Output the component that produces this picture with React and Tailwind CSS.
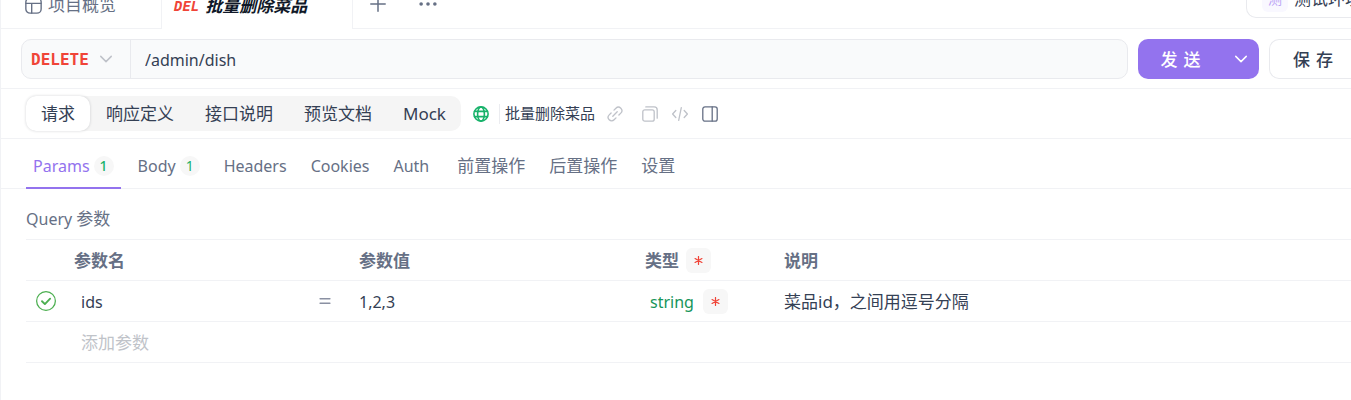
import React, { useState } from "react";
import clsx from "clsx";

const requestTabs = [
  { name: "Params", count: 1 },
  { name: "Body", count: 1 },
  { name: "Headers" },
  { name: "Cookies" },
  { name: "Auth" },
  { name: "前置操作", cjk: true, startsGroup: true },
  { name: "后置操作", cjk: true },
  { name: "设置", cjk: true },
];

const views = ["请求", "响应定义", "接口说明", "预览文档", "Mock"];

function Icon({ size = 16, className, children, ...props }) {
  return (
    <svg
      width={size}
      height={size}
      viewBox="0 0 16 16"
      fill="none"
      stroke="currentColor"
      strokeWidth="1.3"
      strokeLinecap="round"
      strokeLinejoin="round"
      className={clsx("shrink-0", className)}
      aria-hidden="true"
      {...props}
    >
      {children}
    </svg>
  );
}

function Chevron({ className }) {
  return (
    <Icon size={14} className={className}>
      <path d="M2 5l6 6 6-6" strokeWidth="1.7" />
    </Icon>
  );
}

function Required() {
  return (
    <button type="button" aria-label="必需" className="flex size-[25px] shrink-0 items-center justify-center rounded-md bg-[#f7f7f7] text-[#f04438]">
      <Icon size={9} strokeWidth="2.2">
        <path d="M8 1v14M1.9 4.5l12.2 7M14.1 4.5l-12.2 7" />
      </Icon>
    </button>
  );
}

function TopBar() {
  return (
    <header className="-mt-5 flex h-[49px]">
      <button type="button" className="flex w-[160px] items-center gap-1.5 border-b border-[#f1f2f5] pt-0.5 pl-6 text-[17px] text-[#667085]">
        <Icon size={17}>
          <rect x="0.8" y="0.8" width="14.4" height="14.4" rx="4" />
          <path d="M1 6h14M6.3 6v9" />
        </Icon>
        项目概览
      </button>
      <button type="button" className="flex w-[192px] items-center gap-1.5 border-x border-[#f1f2f5] pt-0.5 pl-3 text-[17px] font-bold text-[#101828] italic">
        <span className="font-['DejaVu_Sans_Mono',monospace] text-sm text-[#f04438]">DEL</span>
        批量删除菜品
      </button>
      <div className="flex flex-1 items-center gap-[33px] border-b border-[#f1f2f5] pl-[17px] text-[#667085]">
        <button type="button" aria-label="新建">
          <Icon>
            <path d="M8 0.8v14.4M0.8 8h14.4" strokeWidth="1.5" />
          </Icon>
        </button>
        <button type="button" aria-label="更多">
          <Icon size={18} fill="currentColor" stroke="none">
            <circle cx="1.9" cy="8" r="1.6" />
            <circle cx="8" cy="8" r="1.6" />
            <circle cx="14.1" cy="8" r="1.6" />
          </Icon>
        </button>
      </div>
      <div className="border-b border-[#f1f2f5] pb-2.5">
        <button type="button" className="flex h-full w-[105px] items-center gap-1.5 overflow-hidden rounded-l-[10px] border border-r-0 border-[#e9eaee] pl-[15px] text-[17px] whitespace-nowrap text-[#344054]">
          <span className="flex size-[26px] shrink-0 items-center justify-center rounded-md bg-[#f9f8ff] text-sm text-[#b9a4f5]">测</span>
          测试环境
        </button>
      </div>
    </header>
  );
}

function UrlBar() {
  return (
    <div className="flex gap-2.5 border-b border-[#f1f2f5] pt-2.5 pb-[9px] pl-5">
      <div className="flex h-10 flex-1 overflow-hidden rounded-[10px] border border-[#e9eaee] bg-[#f9fafb]">
        <button type="button" className="flex w-[109px] items-center gap-2.5 border-r border-[#e9eaee] pl-[9px] font-['DejaVu_Sans_Mono',monospace] text-base font-bold text-[#f04438]">
          <span className="pt-0.5">DELETE</span>
          <Chevron className="text-[#bfc2c9]" />
        </button>
        <input aria-label="接口路径" defaultValue="/admin/dish" className="min-w-0 flex-1 bg-transparent px-3.5 pt-0.5 text-base text-[#344054] outline-none" />
      </div>
      <div className="flex h-10 w-[121px] overflow-hidden rounded-[10px] bg-[#9373ee] text-white">
        <button type="button" className="flex flex-1 items-center justify-center gap-1.5 pt-0.5 text-[17px] font-medium">
          <span>发</span>
          <span>送</span>
        </button>
        <button type="button" aria-label="发送选项" className="flex w-9 items-center justify-center">
          <Chevron />
        </button>
      </div>
      <button type="button" className="flex h-10 w-[82px] items-center gap-1.5 rounded-l-[10px] border border-r-0 border-[#e9eaee] pt-0.5 pl-[23px] text-[17px] font-medium text-[#344054]">
        <span>保</span>
        <span>存</span>
      </button>
    </div>
  );
}

function ViewBar() {
  const [view, setView] = useState("请求");

  return (
    <div className="flex items-center border-b border-[#f1f2f5] py-[7px] pl-[25px]">
      <div className="flex h-[35px] gap-px rounded-[10px] bg-[#f5f5f5] text-[17px] text-[#344054]">
        {views.map((name) => (
          <button
            key={name}
            type="button"
            onClick={() => setView(name)}
            className={clsx("rounded-[10px] px-[15px]", view === name && "bg-white shadow-[0_0_3px_rgba(16,24,40,0.18)]")}
          >
            {name}
          </button>
        ))}
      </div>
      <Icon className="ml-3 text-[#17b26a]" strokeWidth="1.6">
        <circle cx="8" cy="8" r="7.1" />
        <ellipse cx="8" cy="8" rx="3.4" ry="7.1" />
        <path d="M1.6 5.4h12.8M1.6 10.6h12.8" />
      </Icon>
      <div className="ml-2.5 h-5 border-l border-[#ebecf0]" />
      <span className="ml-[5px] text-[15px] text-[#344054]">批量删除菜品</span>
      <div className="ml-3 flex items-center gap-3.5 text-[#bfc2c9]">
        <button type="button" aria-label="复制链接" className="mr-[5px]">
          <Icon>
            <path d="M7 4.1l1.9-1.9a3.4 3.4 0 0 1 4.9 4.9l-1.9 1.9M9 11.9l-1.9 1.9a3.4 3.4 0 0 1-4.9-4.9l1.9-1.9M5.8 10.2l4.4-4.4" />
          </Icon>
        </button>
        <button type="button" aria-label="复制">
          <Icon>
            <rect x="0.8" y="3.8" width="11.4" height="11.4" rx="2" />
            <path d="M3.8 0.9h8.4a3 3 0 0 1 3 3v8.3" />
          </Icon>
        </button>
        <button type="button" aria-label="生成代码">
          <Icon>
            <path d="M3.8 4.5L0.6 8l3.2 3.5M12.2 4.5L15.4 8l-3.2 3.5M9.3 1.6L6.7 14.4" />
          </Icon>
        </button>
        <button type="button" aria-label="侧栏" className="text-[#667085]">
          <Icon>
            <rect x="0.8" y="0.8" width="14.4" height="14.4" rx="2.2" />
            <path d="M10.2 1v14" />
          </Icon>
        </button>
      </div>
    </div>
  );
}

function RequestTabs() {
  const [tab, setTab] = useState("Params");

  return (
    <nav className="flex h-[50px] gap-2.5 border-b border-[#f1f2f5] pl-[25px] text-[#667085]">
      {requestTabs.map(({ name, count, cjk, startsGroup }) => (
        <button
          key={name}
          type="button"
          onClick={() => setTab(name)}
          className={clsx(
            "-mb-px flex items-center gap-1 border-b-2 px-[7px] pt-1.5",
            cjk ? "text-[17px]" : "text-base",
            startsGroup && "ml-1",
            tab === name ? "border-[#9373ee] text-[#9373ee]" : "border-transparent"
          )}
        >
          {name}
          {count && (
            <span className={clsx("flex size-5 items-center justify-center rounded-full bg-[#f7f7f7] text-sm text-[#17b26a]", tab === name && "font-medium")}>
              {count}
            </span>
          )}
        </button>
      ))}
    </nav>
  );
}

function QueryParams() {
  return (
    <section className="pt-[15px] pl-[25px] text-[#667085]">
      <h2 className="h-[35px] text-base leading-[30px]">
        Query <span className="text-[17px]">参数</span>
      </h2>
      <table className="w-full table-fixed border-t border-[#f1f2f5] text-left text-[17px] [&_input]:pt-0.5 [&_tr]:h-[41px] [&_tr]:border-b [&_tr]:border-[#f1f2f5]">
        <colgroup>
          <col className="w-12" />
          <col className="w-[285px]" />
          <col className="w-[286px]" />
          <col className="w-[139px]" />
          <col />
        </colgroup>
        <thead>
          <tr>
            <th aria-label="启用" />
            <th className="pt-0.5 font-bold">参数名</th>
            <th className="pt-0.5 font-bold">参数值</th>
            <th className="font-bold">
              <div className="flex items-center gap-[7px]">
                <span className="pt-0.5">类型</span>
                <Required />
              </div>
            </th>
            <th className="pt-0.5 font-bold">说明</th>
          </tr>
        </thead>
        <tbody className="text-[#344054]">
          <tr>
            <td className="pl-2.5">
              <label className="block size-5 text-[#4caf50]">
                <input type="checkbox" defaultChecked aria-label="启用 ids" className="peer sr-only" />
                <Icon size={20} strokeWidth="1">
                  <circle cx="8" cy="8" r="7.5" />
                  <path d="M4.8 8.2l2.3 2.3 4.2-4.4" strokeWidth="1.5" />
                </Icon>
              </label>
            </td>
            <td>
              <div className="flex items-center pr-7 pl-[7px]">
                <input aria-label="参数名" defaultValue="ids" className="min-w-0 flex-1 text-base outline-none" />
                <Icon size={12} className="text-[#8a90a2]">
                  <path d="M1.5 5h13M1.5 11h13" strokeWidth="2" />
                </Icon>
              </div>
            </td>
            <td>
              <input aria-label="参数值" defaultValue="1,2,3" className="w-full text-base outline-none" />
            </td>
            <td>
              <div className="flex items-center gap-[9px] pl-[5px]">
                <button type="button" className="pt-0.5 text-base text-[#16955a]">string</button>
                <Required />
              </div>
            </td>
            <td>
              <input aria-label="说明" defaultValue="菜品id，之间用逗号分隔" className="w-full outline-none" />
            </td>
          </tr>
          <tr>
            <td />
            <td colSpan={4} className="pl-[7px]">
              <input aria-label="添加参数" placeholder="添加参数" className="w-full outline-none placeholder:text-[#c0c3c9]" />
            </td>
          </tr>
        </tbody>
      </table>
    </section>
  );
}

export default function App() {
  return (
    <main className="min-h-screen overflow-hidden border-l border-[#f1f2f5] bg-white font-['Noto_Sans','Noto_Sans_CJK_SC',sans-serif]">
      <TopBar />
      <UrlBar />
      <ViewBar />
      <RequestTabs />
      <QueryParams />
    </main>
  );
}
